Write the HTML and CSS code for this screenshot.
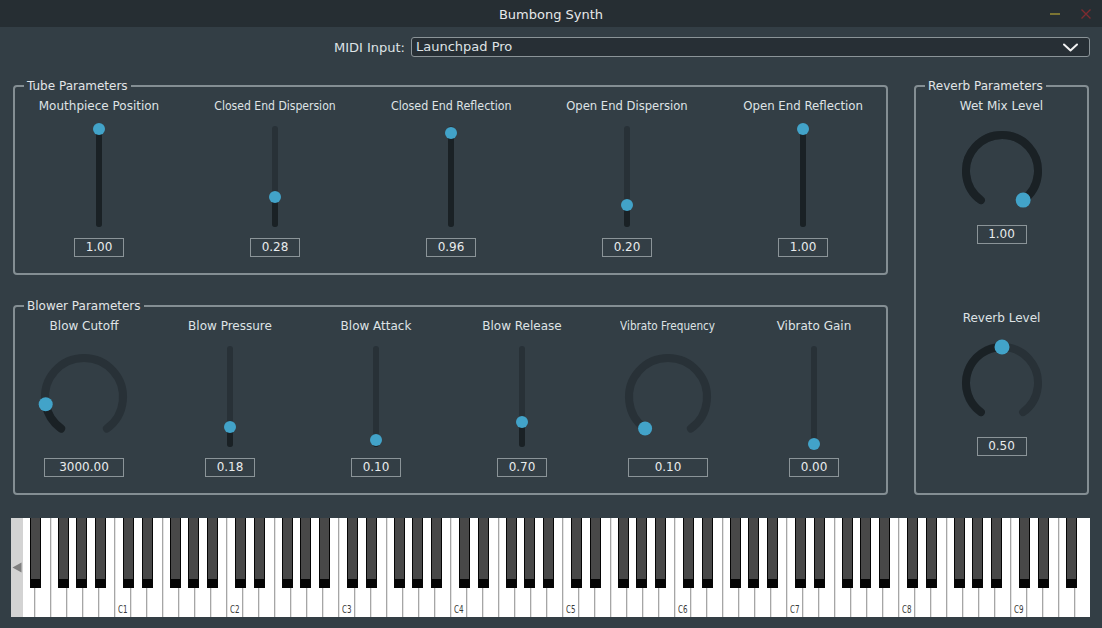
FILE: index.html
```html
<!DOCTYPE html>
<html>
<head>
<meta charset="utf-8">
<title>Bumbong Synth</title>
<link rel="stylesheet" href="styles.css">
</head>
<body>
<div class="window">
  <header class="titlebar">
    <div></div>
    <div class="title">Bumbong Synth</div>
    <div class="winbtns">
      <span class="btn-min"></span>
      <svg class="btn-close" width="10" height="10" viewBox="0 0 10 10"><path d="M0.5 0.5 L9.5 9.5 M9.5 0.5 L0.5 9.5"/></svg>
    </div>
  </header>

  <div class="midi-row">
    <span class="midi-label">MIDI Input:</span>
    <div class="combo">
      <span>Launchpad Pro</span>
      <svg class="chev" width="15" height="9" viewBox="0 0 15 9"><path d="M1 1.5 L7.5 7.5 L14 1.5"/></svg>
    </div>
  </div>

  <main class="panels">
    <div class="left-col">
      <fieldset class="group">
        <legend>Tube Parameters</legend>
        <div class="cols tube-cols">
          <div class="ctrl">
            <div class="lbl">Mouthpiece Position</div>
            <div class="vslider" style="--v:1"><div class="fill"></div><div class="thumb"></div></div>
            <div class="val">1.00</div>
          </div>
          <div class="ctrl">
            <div class="lbl fit-91">Closed End Dispersion</div>
            <div class="vslider" style="--v:0.28"><div class="fill"></div><div class="thumb"></div></div>
            <div class="val">0.28</div>
          </div>
          <div class="ctrl">
            <div class="lbl fit-93">Closed End Reflection</div>
            <div class="vslider" style="--v:0.96"><div class="fill"></div><div class="thumb"></div></div>
            <div class="val">0.96</div>
          </div>
          <div class="ctrl">
            <div class="lbl fit-96">Open End Dispersion</div>
            <div class="vslider" style="--v:0.20"><div class="fill"></div><div class="thumb"></div></div>
            <div class="val">0.20</div>
          </div>
          <div class="ctrl">
            <div class="lbl fit-98">Open End Reflection</div>
            <div class="vslider" style="--v:1"><div class="fill"></div><div class="thumb"></div></div>
            <div class="val">1.00</div>
          </div>
        </div>
      </fieldset>

      <fieldset class="group">
        <legend>Blower Parameters</legend>
        <div class="cols blower-cols">
          <div class="ctrl">
            <div class="lbl">Blow Cutoff</div>
            <svg class="knob big" width="100" height="100" viewBox="0 0 100 100">
              <path class="arc-bg" d="M27.08 81.55 A39 39 0 1 1 72.92 81.55"/>
              <path class="arc-fg" d="M27.08 81.55 A39 39 0 0 1 11.69 57.31"/>
              <circle class="knob-thumb" cx="11.69" cy="57.31" r="7"/>
            </svg>
            <div class="val wide">3000.00</div>
          </div>
          <div class="ctrl">
            <div class="lbl">Blow Pressure</div>
            <div class="vslider" style="--v:0.18"><div class="fill"></div><div class="thumb"></div></div>
            <div class="val">0.18</div>
          </div>
          <div class="ctrl">
            <div class="lbl">Blow Attack</div>
            <div class="vslider" style="--v:0.04"><div class="fill"></div><div class="thumb"></div></div>
            <div class="val">0.10</div>
          </div>
          <div class="ctrl">
            <div class="lbl">Blow Release</div>
            <div class="vslider" style="--v:0.23"><div class="fill"></div><div class="thumb"></div></div>
            <div class="val">0.70</div>
          </div>
          <div class="ctrl">
            <div class="lbl fit-87">Vibrato Frequency</div>
            <svg class="knob big" width="100" height="100" viewBox="0 0 100 100">
              <path class="arc-bg" d="M27.08 81.55 A39 39 0 1 1 72.92 81.55"/>
              <circle class="knob-thumb" cx="27.08" cy="81.55" r="7"/>
            </svg>
            <div class="val wide">0.10</div>
          </div>
          <div class="ctrl">
            <div class="lbl">Vibrato Gain</div>
            <div class="vslider" style="--v:0"><div class="fill"></div><div class="thumb"></div></div>
            <div class="val">0.00</div>
          </div>
        </div>
      </fieldset>
    </div>

    <fieldset class="group reverb">
      <legend>Reverb Parameters</legend>
      <div class="reverb-body">
        <div class="ctrl">
          <div class="lbl">Wet Mix Level</div>
          <svg class="knob small" width="100" height="100" viewBox="0 0 100 100">
            <path class="arc-bg" d="M28.84 79.12 A36 36 0 1 1 71.16 79.12"/>
            <path class="arc-fg" d="M28.84 79.12 A36 36 0 1 1 71.16 79.12"/>
            <circle class="knob-thumb" cx="71.16" cy="79.12" r="7.5"/>
          </svg>
          <div class="val">1.00</div>
        </div>
        <div class="ctrl second">
          <div class="lbl">Reverb Level</div>
          <svg class="knob small" width="100" height="100" viewBox="0 0 100 100">
            <path class="arc-bg" d="M28.84 79.12 A36 36 0 1 1 71.16 79.12"/>
            <path class="arc-fg" d="M28.84 79.12 A36 36 0 0 1 50 14"/>
            <circle class="knob-thumb" cx="50" cy="14" r="7.5"/>
          </svg>
          <div class="val">0.50</div>
        </div>
      </div>
    </fieldset>
  </main>

  <div class="keyboard">
    <div class="kb-arrow"><svg width="10" height="11" viewBox="0 0 10 11"><polygon points="0.5,5.5 9.5,0.5 9.5,10.5"/></svg></div>
    <div class="keys">
      <div class="strip">
        <div class="oct"><span class="w"></span><span class="w"></span><span class="w"></span><span class="w"></span><span class="w"></span><span class="w"></span><span class="w"></span><span class="k cs"></span><span class="k ds"></span><span class="k fs"></span><span class="k gs"></span><span class="k as"></span></div>
        <div class="oct"><span class="w"><em>C1</em></span><span class="w"></span><span class="w"></span><span class="w"></span><span class="w"></span><span class="w"></span><span class="w"></span><span class="k cs"></span><span class="k ds"></span><span class="k fs"></span><span class="k gs"></span><span class="k as"></span></div>
        <div class="oct"><span class="w"><em>C2</em></span><span class="w"></span><span class="w"></span><span class="w"></span><span class="w"></span><span class="w"></span><span class="w"></span><span class="k cs"></span><span class="k ds"></span><span class="k fs"></span><span class="k gs"></span><span class="k as"></span></div>
        <div class="oct"><span class="w"><em>C3</em></span><span class="w"></span><span class="w"></span><span class="w"></span><span class="w"></span><span class="w"></span><span class="w"></span><span class="k cs"></span><span class="k ds"></span><span class="k fs"></span><span class="k gs"></span><span class="k as"></span></div>
        <div class="oct"><span class="w"><em>C4</em></span><span class="w"></span><span class="w"></span><span class="w"></span><span class="w"></span><span class="w"></span><span class="w"></span><span class="k cs"></span><span class="k ds"></span><span class="k fs"></span><span class="k gs"></span><span class="k as"></span></div>
        <div class="oct"><span class="w"><em>C5</em></span><span class="w"></span><span class="w"></span><span class="w"></span><span class="w"></span><span class="w"></span><span class="w"></span><span class="k cs"></span><span class="k ds"></span><span class="k fs"></span><span class="k gs"></span><span class="k as"></span></div>
        <div class="oct"><span class="w"><em>C6</em></span><span class="w"></span><span class="w"></span><span class="w"></span><span class="w"></span><span class="w"></span><span class="w"></span><span class="k cs"></span><span class="k ds"></span><span class="k fs"></span><span class="k gs"></span><span class="k as"></span></div>
        <div class="oct"><span class="w"><em>C7</em></span><span class="w"></span><span class="w"></span><span class="w"></span><span class="w"></span><span class="w"></span><span class="w"></span><span class="k cs"></span><span class="k ds"></span><span class="k fs"></span><span class="k gs"></span><span class="k as"></span></div>
        <div class="oct"><span class="w"><em>C8</em></span><span class="w"></span><span class="w"></span><span class="w"></span><span class="w"></span><span class="w"></span><span class="w"></span><span class="k cs"></span><span class="k ds"></span><span class="k fs"></span><span class="k gs"></span><span class="k as"></span></div>
        <div class="oct"><span class="w"><em>C9</em></span><span class="w"></span><span class="w"></span><span class="w"></span><span class="w"></span><span class="k cs"></span><span class="k ds"></span><span class="k fs"></span></div>
      </div>
    </div>
  </div>
</div>
</body>
</html>
```

FILE: styles.css
```css
html, body {
  margin: 0;
  padding: 0;
}

body {
  width: 1102px;
  height: 628px;
  overflow: hidden;
  background: #333e45;
  color: #dfe3e5;
  font-family: "DejaVu Sans", Verdana, sans-serif;
}

/* ---------- title bar ---------- */
.titlebar {
  height: 27px;
  display: grid;
  grid-template-columns: 1fr auto 1fr;
  align-items: center;
  background: #262e33;
}

.title {
  font-size: 13px;
  line-height: 15px;
  padding-top: 2px;
  color: #e6e9ea;
}

.winbtns {
  justify-self: end;
  display: flex;
  align-items: center;
  gap: 21px;
  padding-right: 11px;
}

.btn-min {
  width: 10px;
  height: 2px;
  background: #7b7433;
}

.btn-close path {
  stroke: #7e2b30;
  stroke-width: 1.4;
  fill: none;
}

/* ---------- midi input row ---------- */
.midi-row {
  display: flex;
  justify-content: flex-end;
  align-items: center;
  gap: 6px;
  height: 20px;
  margin: 10px 12px 0 0;
  font-size: 13px;
}

.combo {
  width: 679px;
  height: 20px;
  box-sizing: border-box;
  border: 1px solid #8b9498;
  border-radius: 3px;
  background: #272f35;
  display: flex;
  align-items: center;
  justify-content: space-between;
  padding: 0 11px 0 4px;
  line-height: 16px;
}

.chev path {
  stroke: #f2f2f2;
  stroke-width: 2;
  fill: none;
  stroke-linecap: round;
  stroke-linejoin: round;
}

/* ---------- panels ---------- */
.panels {
  display: grid;
  grid-template-columns: 875px 175px;
  gap: 26px;
  margin: 22px 13px 0 13px;
}

.left-col {
  display: flex;
  flex-direction: column;
  gap: 24px;
}

.group {
  margin: 0;
  padding: 0;
  min-width: 0;
  border: 2px solid #848e93;
  border-radius: 4px;
}

.group legend {
  margin-left: 9px;
  padding: 0 3px;
  font-size: 12px;
  line-height: 14px;
  color: #e2e5e7;
}

.cols {
  display: flex;
}

.tube-cols {
  gap: 26px;
  padding: 6px 8px 16px 9px;
}

.tube-cols .ctrl {
  width: 150px;
}

.blower-cols {
  gap: 20px;
  padding: 6px 9px 16px 6px;
}

.blower-cols .ctrl {
  width: 126px;
}

.ctrl {
  display: flex;
  flex-direction: column;
  align-items: center;
}

.lbl {
  font-size: 12px;
  line-height: 14px;
  white-space: nowrap;
}

.fit-87 { transform: scaleX(0.87); }
.fit-91 { transform: scaleX(0.905); }
.fit-93 { transform: scaleX(0.925); }
.fit-96 { transform: scaleX(0.965); }
.fit-98 { transform: scaleX(0.98); }

/* vertical slider */
.vslider {
  position: relative;
  width: 6px;
  height: 101px;
  margin: 13px 0 11px;
  border-radius: 3px;
  background: #283137;
}

.vslider .fill {
  position: absolute;
  left: 0;
  right: 0;
  bottom: 0;
  height: calc(98px - (1 - var(--v)) * 95px);
  border-radius: 3px;
  background: #1a2125;
}

.vslider .thumb {
  position: absolute;
  left: -3px;
  top: calc(3px + (1 - var(--v)) * 95px - 6px);
  width: 12px;
  height: 12px;
  border-radius: 50%;
  background: #42a3c9;
}

/* rotary knobs */
.knob {
  display: block;
  overflow: visible;
}

.knob.big {
  margin: 14px 0 11px;
}

.knob.small {
  margin: 8px 0 4px;
}

.arc-bg,
.arc-fg {
  fill: none;
  stroke-width: 8;
  stroke-linecap: round;
}

.arc-bg { stroke: #283137; }
.arc-fg { stroke: #1a2125; }

.knob-thumb { fill: #42a3c9; }

/* value boxes */
.val {
  width: 50px;
  height: 19px;
  box-sizing: border-box;
  border: 1px solid #8b9498;
  font-size: 12px;
  line-height: 17px;
  text-align: center;
  color: #e8ebec;
}

.val.wide {
  width: 80px;
}

/* reverb */
.reverb-body {
  display: flex;
  flex-direction: column;
  align-items: center;
  padding-top: 6px;
}

.reverb-body .second {
  margin-top: 67px;
}

/* ---------- keyboard ---------- */
.keyboard {
  display: flex;
  height: 99px;
  margin: 23px 12px 0 11px;
}

.kb-arrow {
  width: 12px;
  flex: none;
  background: #d3d3d3;
  display: flex;
  align-items: center;
  justify-content: center;
}

.kb-arrow polygon {
  fill: #7f7f7f;
}

.keys {
  flex: 1;
  overflow: hidden;
  display: flex;
}

.strip {
  display: flex;
  margin-left: -21px;
  flex: none;
}

.oct {
  position: relative;
  display: flex;
  flex: none;
}

.w {
  position: relative;
  width: 16px;
  height: 99px;
  box-sizing: border-box;
  background: #ffffff;
  border-left: 1px solid #a6a6a6;
  box-shadow: inset 1px 0 0 #e4e4e4;
}

.w em {
  position: absolute;
  left: 3px;
  bottom: 2px;
  font-style: normal;
  font-size: 10.5px;
  line-height: 11px;
  color: #3a3a3a;
  transform: scaleX(0.68);
  transform-origin: left center;
}

.k {
  position: absolute;
  top: 0;
  width: 11px;
  height: 70px;
  background: #050505;
}

.k::before {
  content: "";
  position: absolute;
  left: 1px;
  right: 1px;
  top: 0;
  bottom: 9px;
  background: #484848;
}

.cs { left: 9.3px; }
.ds { left: 27.5px; }
.fs { left: 56.2px; }
.gs { left: 74.4px; }
.as { left: 92.6px; }
```
